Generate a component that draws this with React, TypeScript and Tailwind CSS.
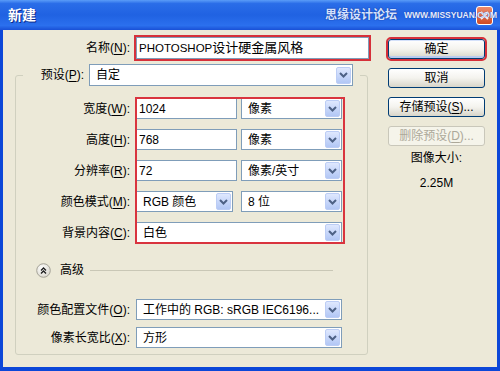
import React from "react";

const U = ({ children }: { children: React.ReactNode }) => <span className="underline underline-offset-[2px]">{children}</span>;

function Arrow() {
  return (
    <div className="w-[15px] h-[17px] shrink-0 rounded-[2px] border border-[#bccdf5] bg-linear-to-b from-[#dfe8fe] to-[#b2c7f5] flex items-center justify-center">
      <svg width="9" height="6" viewBox="0 0 9 6">
        <path d="M1 1 L4.5 4.5 L8 1" fill="none" stroke="#4d6185" strokeWidth="2" />
      </svg>
    </div>
  );
}

function Select({ text, cls }: { text: React.ReactNode; cls: string }) {
  return (
    <div className={"flex items-center justify-between bg-white border border-[#7f9db9] pl-[6px] pr-px " + cls}>
      <span className="whitespace-nowrap overflow-hidden">{text}</span>
      <Arrow />
    </div>
  );
}

function Input({ text, cls }: { text: string; cls: string }) {
  return <div className={"flex items-center bg-white border border-[#7f9db9] pl-[2px] " + cls}>{text}</div>;
}

function Btn({ children, cls = "", disabled = false }: { children: React.ReactNode; cls?: string; disabled?: boolean }) {
  return (
    <div
      className={
        "w-[97px] h-[20px] rounded-[3px] border flex items-center justify-center " +
        (disabled
          ? "border-[#c9c7ba] bg-[#f5f4ea] text-[#aca899] "
          : "border-[#003c74] bg-linear-to-b from-white via-[#f4f3ee] to-[#d8d5c9] text-black ") +
        cls
      }
    >
      {children}
    </div>
  );
}

export default function App() {
  return (
    <div className="w-[500px] h-[371px] flex flex-col overflow-hidden text-[12px] leading-[16px] text-black font-['Liberation_Sans','Noto_Sans_CJK_SC',sans-serif]">
      {/* title bar */}
      <div className="relative h-[30px] shrink-0 flex items-center justify-between pl-[8px] pr-[7px] bg-[linear-gradient(180deg,#5a9cf8_0%,#2a6de8_12%,#2062e2_50%,#2b70ee_85%,#1950d6_100%)]">
        <span className="text-white font-bold text-[14px] [text-shadow:1px_1px_0_#0a2a8a]">新建</span>
        <div className="relative w-[17px] h-[19px] rounded-[3px] border border-white bg-linear-to-b from-[#ec8a6c] to-[#cf4a22] flex items-center justify-center">
          <svg width="9" height="9" viewBox="0 0 9 9">
            <path d="M1 1 L8 8 M8 1 L1 8" stroke="white" strokeWidth="2" />
          </svg>
        </div>
        <div className="absolute z-10 left-[325px] top-[7px] flex items-center gap-[7px] whitespace-nowrap pointer-events-none">
          <span className="text-[12px] font-bold text-[#d3e2ff] [text-shadow:0_0_1px_#17369a,0_0_1px_#17369a]">思缘设计论坛</span>
          <span className="text-[8.5px] font-bold text-[#e4edff] [text-shadow:0_0_1px_#17369a]">WWW.MISSYUAN.COM</span>
        </div>
      </div>

      {/* body */}
      <div className="flex-1 flex bg-[#ece9d8] border-l-[3px] border-r-[3px] border-b-[4px] border-[#0c47d8]">
        {/* left column */}
        <div className="w-[367px] shrink-0 pt-[7px] flex flex-col">
          <div className="flex items-center">
            <div className="w-[127px] text-right">名称(<U>N</U>):</div>
            <div className="ml-[6px] w-[233px] h-[22px] bg-white border border-[#7f9db9] outline-2 outline-[#d6303a] flex items-center pl-[2px] text-[13px] whitespace-nowrap">
              <span className="text-[11.5px]">PHOTOSHOP</span>设计硬金属风格
            </div>
          </div>

          <fieldset className="mt-[5px] ml-[12px] w-[353px] border border-[#d0d0bf] rounded-[3px] pb-[6px]">
            <legend className="ml-[7px] pr-[7px]">
              <div className="flex items-center">
                <div className="w-[61px] text-right">预设(<U>P</U>):</div>
                <Select cls="ml-[5px] w-[264px] h-[22px]" text="自定" />
              </div>
            </legend>

            <div className="mt-[12px] flex">
              <div className="w-[114px] flex flex-col gap-[10px]">
                <div className="h-[21px] flex items-center justify-end">宽度(<U>W</U>):</div>
                <div className="h-[21px] flex items-center justify-end">高度(<U>H</U>):</div>
                <div className="h-[21px] flex items-center justify-end">分辨率(<U>R</U>):</div>
                <div className="h-[21px] flex items-center justify-end">颜色模式(<U>M</U>):</div>
                <div className="h-[21px] flex items-center justify-end">背景内容(<U>C</U>):</div>
              </div>
              <div className="relative ml-[6px] flex flex-col gap-[10px]">
                <div className="flex gap-[4px]">
                  <Input cls="w-[101px] h-[21px]" text="1024" />
                  <Select cls="w-[101px] h-[21px]" text="像素" />
                </div>
                <div className="flex gap-[4px]">
                  <Input cls="w-[101px] h-[21px]" text="768" />
                  <Select cls="w-[101px] h-[21px]" text="像素" />
                </div>
                <div className="flex gap-[4px]">
                  <Input cls="w-[101px] h-[21px]" text="72" />
                  <Select cls="w-[101px] h-[21px]" text="像素/英寸" />
                </div>
                <div className="flex gap-[8px]">
                  <Select cls="w-[97px] h-[21px]" text="RGB 颜色" />
                  <Select cls="w-[101px] h-[21px]" text="8 位" />
                </div>
                <div className="flex">
                  <Select cls="w-[206px] h-[21px]" text="白色" />
                </div>
                <div className="absolute -left-px -top-px -right-[3px] -bottom-px border-2 border-[#d9343e] pointer-events-none" />
              </div>
            </div>

            <div className="mt-[19px] h-[16px] flex items-center pl-[20px] pr-[34px]">
              <svg width="15" height="15" viewBox="0 0 15 15" className="shrink-0">
                <defs>
                  <radialGradient id="cg" cx="0.4" cy="0.35" r="0.7">
                    <stop offset="0" stopColor="#ffffff" />
                    <stop offset="1" stopColor="#d9d6cc" />
                  </radialGradient>
                </defs>
                <circle cx="7.5" cy="7.5" r="6.8" fill="url(#cg)" stroke="#a5a398" strokeWidth="1" />
                <path d="M5 7.5 L7.5 5 L10 7.5 M5 10.5 L7.5 8 L10 10.5" fill="none" stroke="#1e1e1e" strokeWidth="1.4" />
              </svg>
              <span className="ml-[9px]">高级</span>
              <div className="ml-[6px] flex-1 h-px bg-[#c9c7b6]" />
            </div>

            <div className="mt-[21px] flex items-center">
              <div className="w-[114px] text-right">颜色配置文件(<U>O</U>):</div>
              <Select cls="ml-[6px] w-[206px] h-[21px]" text="工作中的 RGB: sRGB IEC6196..." />
            </div>
            <div className="mt-[7px] flex items-center">
              <div className="w-[114px] text-right">像素长宽比(<U>X</U>):</div>
              <Select cls="ml-[6px] w-[206px] h-[21px]" text="方形" />
            </div>
          </fieldset>
        </div>

        {/* right column */}
        <div className="flex-1 pl-[18px] pt-[9px] flex flex-col">
          <Btn cls="outline-2 outline-[#d6303a] shadow-[inset_0_-2px_0_#b9cbf0,inset_0_1px_0_#d5e1fa]">确定</Btn>
          <Btn cls="mt-[9px]">取消</Btn>
          <Btn cls="mt-[9px]">
            存储预设(<U>S</U>)...
          </Btn>
          <Btn cls="mt-[9px]" disabled>
            删除预设(<U>D</U>)...
          </Btn>
          <div className="w-[97px] mt-[4px] text-center">图像大小:</div>
          <div className="w-[97px] mt-[9px] text-center">2.25M</div>
        </div>
      </div>
    </div>
  );
}
